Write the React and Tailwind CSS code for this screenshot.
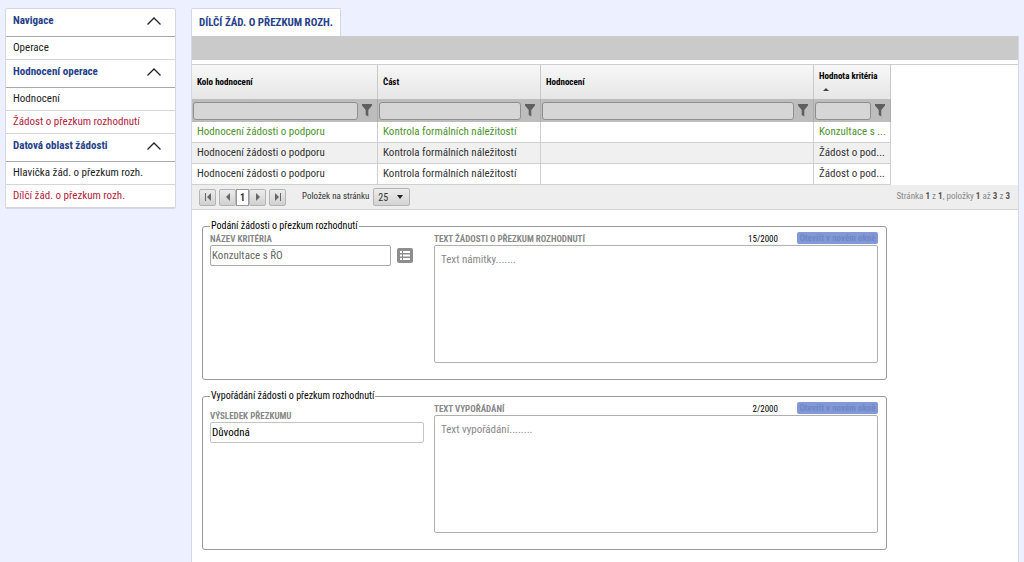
import React, { useState } from 'react';

const menu = [
  { title: 'Navigace', items: [{ label: 'Operace' }] },
  {
    title: 'Hodnocení operace',
    items: [{ label: 'Hodnocení' }, { label: 'Žádost o přezkum rozhodnutí', active: true }],
  },
  {
    title: 'Datová oblast žádosti',
    items: [{ label: 'Hlavička žád. o přezkum rozh.' }, { label: 'Dílčí žád. o přezkum rozh.', active: true }],
  },
];

const columns = [
  { label: 'Kolo hodnocení', width: 'w-[186px]' },
  { label: 'Část', width: 'w-[163px]' },
  { label: 'Hodnocení', width: 'w-[273px]' },
  { label: 'Hodnota kritéria', width: 'w-[77px]', sorted: true },
];

const rows = [
  ['Hodnocení žádosti o podporu', 'Kontrola formálních náležitostí', '', 'Konzultace s ...'],
  ['Hodnocení žádosti o podporu', 'Kontrola formálních náležitostí', '', 'Žádost o pod...'],
  ['Hodnocení žádosti o podporu', 'Kontrola formálních náležitostí', '', 'Žádost o pod...'],
];

const pageButton = 'flex h-[17px] w-[17px] items-center justify-center rounded-xs border border-[#b4b4b4] bg-linear-to-b from-[#ececec] to-[#d0d0d0] text-[#666]';
const fieldLabel = 'block text-[9px] leading-[11px] font-bold uppercase text-[#888]';

const FilterIcon = () => (
  <svg viewBox="0 0 10 13" className="h-[13px] w-[10px]" fill="#5f5f5f">
    <path d="M0 0h10v1.500L6.300 6V12.500L3.700 11V6L0 1.500z" />
  </svg>
);

const MenuSection = ({ title, items }) => {
  const [open, setOpen] = useState(true);

  return (
    <section>
      <button
        type="button"
        onClick={() => setOpen(!open)}
        className="flex h-7 w-full items-center justify-between border-b border-[#a8a8a8] pr-[14px] pl-[7px] pb-[3px] text-[11px] font-bold text-[#26418a]"
      >
        {title}
        <svg viewBox="0 0 14 8" className={`h-2 w-[14px] ${open ? '' : 'rotate-180'}`} fill="none" stroke="#222" strokeWidth="1.3">
          <path d="M.5 7.500L7 1l6.500 6.500" />
        </svg>
      </button>
      {open && items.map(item => (
        <a
          key={item.label}
          href="#"
          className={`flex h-[23px] items-center border-b border-[#d5d5d5] pl-[7px] text-[11px] ${item.active ? 'text-[#b5213b]' : 'text-[#222]'}`}
        >
          {item.label}
        </a>
      ))}
    </section>
  );
};

const Grid = () => (
  <table className="w-[699px] table-fixed border-separate border-spacing-0 text-left">
    <thead>
      <tr className="h-[34px] bg-linear-to-b from-[#f7f7f7] to-[#e6e6e6]">
        {columns.map(col => (
          <th key={col.label} className={`${col.width} border-r border-[#c9c9c9] pl-[5px] text-[9px] leading-[14px] font-bold text-black`}>
            {col.label}
            {col.sorted && (
              <svg viewBox="0 0 6 4" className="mt-1 mb-1 ml-1 h-1 w-[6px]" fill="#444">
                <path d="M0 4l3-3 3 3z" />
              </svg>
            )}
          </th>
        ))}
      </tr>
      <tr className="h-[23px] bg-[#bdbdbd]">
        {columns.map(col => (
          <td key={col.label} className="border-r border-[#adadad] pl-px">
            <div className="flex items-center gap-1 pr-[5px]">
              <input aria-label={`Filtr: ${col.label}`} className="h-[18px] min-w-0 flex-1 rounded-[3px] border border-[#8f8f8f] bg-[#d6d6d6] px-1 text-[11px]" />
              <button type="button" aria-label={`Filtrovat ${col.label}`}><FilterIcon /></button>
            </div>
          </td>
        ))}
      </tr>
    </thead>
    <tbody>
      {rows.map((row, idx) => (
        <tr key={idx} className={`h-[21px] text-[11px] leading-[16px] ${idx === 0 ? 'text-[#4d9329]' : 'text-[#333]'} ${idx === 1 ? 'bg-[#f0f0f0]' : ''}`}>
          {row.map((cell, cIdx) => (
            <td key={cIdx} className="border-r border-b border-[#cfcfcf] pl-[5px] whitespace-nowrap">{cell}</td>
          ))}
        </tr>
      ))}
    </tbody>
  </table>
);

const Pager = () => (
  <div className="flex h-[25px] items-center justify-between border-b border-[#d3d3d3] bg-[#eeeeee] pr-2 pl-[7px] text-[9px] text-[#333]">
    <div className="flex items-center">
      <button type="button" aria-label="První stránka" className={pageButton}>
        <svg viewBox="0 0 8 8" className="size-2" fill="currentColor"><path d="M1 0h1v8H1zM7 0v8L3 4z" /></svg>
      </button>
      <button type="button" aria-label="Předchozí stránka" className={`${pageButton} ml-[3px]`}>
        <svg viewBox="0 0 8 8" className="size-2" fill="currentColor"><path d="M6 0v8L2 4z" /></svg>
      </button>
      <button type="button" className="h-[17px] w-[13px] border border-[#999] bg-white text-[10px] font-bold">1</button>
      <button type="button" aria-label="Další stránka" className={pageButton}>
        <svg viewBox="0 0 8 8" className="size-2" fill="currentColor"><path d="M2 0v8l4-4z" /></svg>
      </button>
      <button type="button" aria-label="Poslední stránka" className={`${pageButton} ml-[3px]`}>
        <svg viewBox="0 0 8 8" className="size-2" fill="currentColor"><path d="M6 0h1v8H6zM1 0v8l4-4z" /></svg>
      </button>
      <label htmlFor="page-size" className="mr-1 ml-4">Položek na stránku</label>
      <div className="relative">
        <select id="page-size" defaultValue="25" className="h-[18px] w-[37px] appearance-none rounded-xs border border-[#b4b4b4] bg-linear-to-b from-[#ececec] to-[#d4d4d4] pl-1 text-[10px]">
          <option>10</option>
          <option>25</option>
          <option>50</option>
        </select>
        <svg viewBox="0 0 6 4" className="pointer-events-none absolute top-[7px] right-[7px] h-1 w-[6px]" fill="#222">
          <path d="M0 0h6L3 4z" />
        </svg>
      </div>
    </div>
    <p className="text-[#888]">
      Stránka <b className="text-[#555]">1</b> z <b className="text-[#555]">1</b>, položky <b className="text-[#555]">1</b> až <b className="text-[#555]">3</b> z <b className="text-[#555]">3</b>
    </p>
  </div>
);

const TextBlock = ({ id, label, count, value }) => (
  <div className="ml-auto w-[444px]">
    <div className="flex h-[11px] items-center">
      <label htmlFor={id} className={fieldLabel}>{label}</label>
      <span className="mr-[19px] ml-auto text-[9px] text-black">{count}</span>
      <button type="button" disabled className="-mt-1 h-3 w-[81px] rounded-xs bg-[#8299d6] text-center text-[9px] leading-3 font-bold whitespace-nowrap text-[#6f87c6]">
        Otevřít v novém okně
      </button>
    </div>
    <textarea id={id} defaultValue={value} className="block h-[118px] w-full resize-none rounded-xs border border-[#b0b0b0] px-[6px] py-[6px] text-[11px] leading-[16px] text-[#888]" />
  </div>
);

const Section = ({ title, children }) => (
  <fieldset className="w-[685px] rounded-[3px] border border-[#999] pr-2 pb-4 pl-[7px]">
    <legend className="px-px text-[10px] leading-[16px] text-black">{title}</legend>
    <div className="flex items-start">{children}</div>
  </fieldset>
);

const App = () => (
  <div className="flex min-h-screen gap-[15px] bg-[#edf0fe] pt-2 pr-[5px] pl-[5px] font-['Roboto_Condensed','Liberation_Sans_Narrow',Roboto,sans-serif]">
    <nav className="w-[171px] shrink-0 self-start rounded-xs border border-[#d5d8e4] bg-white">
      {menu.map(section => <MenuSection key={section.title} {...section} />)}
    </nav>

    <main className="flex min-w-0 flex-1 flex-col">
      <h1 className="flex h-7 items-center self-start rounded-t-xs border border-b-0 border-[#d5d8e4] bg-white px-[7px] pt-[2px] text-[11px] font-bold uppercase text-[#26418a]">
        Dílčí žád. o přezkum rozh.
      </h1>
      <div className="flex-1 border-x border-[#d5d8e4] bg-white">
        <div className="h-6 bg-[#cacaca]" />
        <div className="mt-1 border-t border-[#cfcfcf]">
          <Grid />
          <Pager />
        </div>
        <form className="flex flex-col gap-2 px-[10px] pt-2">
          <Section title="Podání žádosti o přezkum rozhodnutí">
            <div>
              <label htmlFor="criterion" className={fieldLabel}>Název kritéria</label>
              <div className="flex items-center gap-[6px]">
                <input id="criterion" defaultValue="Konzultace s ŘO" className="h-[21px] w-[181px] rounded-xs border border-[#a8a8a8] px-px text-[11px] text-[#666]" />
                <button type="button" aria-label="Vybrat kritérium" className="flex h-[15px] w-4 items-center justify-center rounded-xs bg-[#8d8d8d]">
                  <svg viewBox="0 0 10 9" className="h-[9px] w-[10px]" fill="#fff">
                    <path d="M0 0h2v2H0zM3 0h7v2H3zM0 3.500h2v2H0zM3 3.500h7v2H3zM0 7h2v2H0zM3 7h7v2H3z" />
                  </svg>
                </button>
              </div>
            </div>
            <TextBlock id="request-text" label="Text žádosti o přezkum rozhodnutí" count="15/2000" value="Text námitky......." />
          </Section>
          <Section title="Vypořádání žádosti o přezkum rozhodnutí">
            <div className="pt-[7px]">
              <label htmlFor="result" className={fieldLabel}>Výsledek přezkumu</label>
              <input id="result" defaultValue="Důvodná" className="block h-[21px] w-[214px] rounded-xs border border-[#c4c4c4] px-px text-[11px] text-black" />
            </div>
            <TextBlock id="settlement-text" label="Text vypořádání" count="2/2000" value="Text vypořádání........" />
          </Section>
        </form>
      </div>
    </main>
  </div>
);

export default App;
